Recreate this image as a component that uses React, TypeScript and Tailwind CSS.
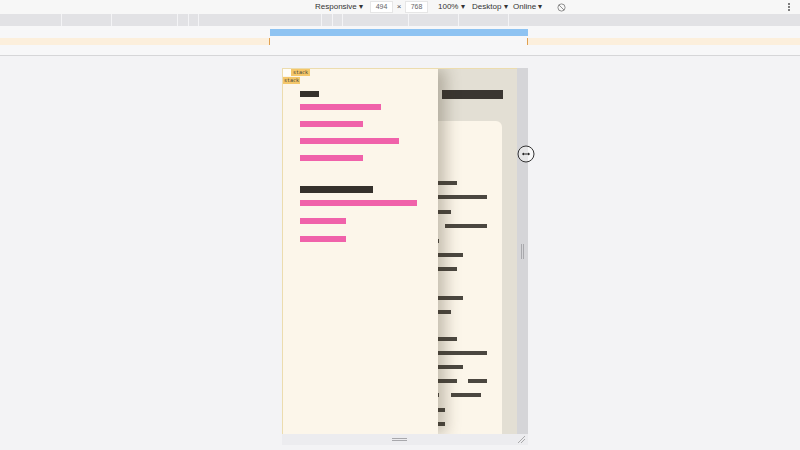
import React from 'react';

const pink = [
  { w: 81 },
  { w: 63 },
  { w: 99 },
  { w: 63 },
];
const pink2 = [{ w: 117 }, { w: 46 }, { w: 46 }];

// card lines: [top offset, end x of first bar, optional second bar [x1, x2]]
const cardLines: [number, number, [number, number]?][] = [
  [181, 457],
  [195, 487],
  [210, 451],
  [224, 0, [445, 487]],
  [239, 439],
  [253, 463],
  [267, 457],
  [296, 463],
  [310, 451],
  [337, 457],
  [351, 487],
  [365, 463],
  [379, 457, [468, 487]],
  [393, 439, [451, 481]],
  [408, 445],
  [422, 445],
];

const CARD_LEFT = 410;

function Toolbar() {
  return (
    <div className="h-[14px] bg-[#f7f7f7] flex items-center text-[8px] text-[#333] relative" style={{ fontFamily: 'Liberation Sans, Arial, sans-serif' }}>
      <div className="flex items-center pl-[315px]">
        <span className="w-[50px]">Responsive ▾</span>
        <span className="ml-[5px] w-[23px] h-[12px] bg-white border border-[#e6e6e6] flex items-center justify-center text-[7px] text-[#666]">494</span>
        <span className="w-[12px] text-center text-[#555]">×</span>
        <span className="w-[23px] h-[12px] bg-white border border-[#e6e6e6] flex items-center justify-center text-[7px] text-[#666]">768</span>
        <span className="ml-[10px] w-[34px]">100% ▾</span>
        <span className="w-[41px]">Desktop ▾</span>
        <span className="w-[44px]">Online ▾</span>
        <svg width="9" height="9" viewBox="0 0 10 10" fill="none" stroke="#777" strokeWidth="0.9">
          <circle cx="5" cy="5" r="4" />
          <path d="M2.2 2.2 L7.8 7.8" />
        </svg>
      </div>
      <div className="absolute right-[10px] top-[3px] flex flex-col gap-[1px]">
        <span className="w-[2px] h-[2px] bg-[#555] rounded-full" />
        <span className="w-[2px] h-[2px] bg-[#555] rounded-full" />
        <span className="w-[2px] h-[2px] bg-[#555] rounded-full" />
      </div>
    </div>
  );
}

function Rulers() {
  const seps = [62, 50, 66, 11, 10, 123, 11, 10, 66, 50, 50];
  return (
    <div>
      <div className="h-[12px] bg-[#e2e2e5] flex">
        {seps.map((w, i) => (
          <div key={i} className="h-full border-r border-[#f4f4f6]" style={{ width: w }} />
        ))}
      </div>
      <div className="h-[12px] bg-[#f7f7f8] flex items-center pl-[270px]">
        <div className="w-[258px] h-[7px] bg-[#8ec3f2]" />
      </div>
      <div className="h-[7px] flex">
        <div className="w-[270px] bg-[#fcefdc] border-r border-[#e0a050]" />
        <div className="w-[257px] bg-[#f7f7f8]" />
        <div className="flex-1 bg-[#fcefdc] border-l border-[#e0a050]" />
      </div>
      <div className="h-[11px] bg-[#f7f7f8] border-b border-[#d6d6d8]" />
    </div>
  );
}

function Device() {
  return (
    <div className="relative w-[235px] h-[366px] bg-[#e3dfd4] border-t border-[#ecdcae] overflow-hidden">
      {/* page behind the drawer */}
      <div className="absolute left-[160px] top-[21px] w-[61px] h-[9px] bg-[#3a3631]" />
      <div className="absolute top-[52px] bottom-0 bg-[#fcf6ea] rounded-tr-[6px]" style={{ left: CARD_LEFT - 282, width: 502 - CARD_LEFT }}>
        {cardLines.map(([y, end, second], i) => (
          <React.Fragment key={i}>
            {end > 0 && (
              <div className="absolute h-[4px] bg-[#4b4740]" style={{ top: y - 121, left: 10, width: end - CARD_LEFT - 10 }} />
            )}
            {second && (
              <div className="absolute h-[4px] bg-[#4b4740]" style={{ top: y - 121, left: second[0] - CARD_LEFT, width: second[1] - second[0] }} />
            )}
          </React.Fragment>
        ))}
      </div>

      {/* drawer */}
      <div className="absolute left-0 top-0 bottom-0 w-[156px] bg-[#fcf6ea] border-l border-[#ecdcae] shadow-[8px_0_14px_rgba(60,50,30,0.28)] flex flex-col pl-[17px]">
        <div className="flex flex-col" style={{ fontFamily: 'DejaVu Sans Mono, monospace' }}>
          <div className="-ml-[17px] flex items-center">
            <span className="w-[8px] h-[7px] bg-[#fffdf8]" />
            <span className="w-fit px-[2px] bg-[#f4c76a] text-[5px] leading-[7px] text-[#333]">stack</span>
          </div>
          <span className="-ml-[17px] mt-[1px] w-fit px-[1px] bg-[#f4c76a] text-[5px] leading-[7px] text-[#333]">stack</span>
        </div>
        <div className="mt-[7px] w-[19px] h-[6px] bg-[#35312c]" />
        <div className="flex flex-col gap-[11px] mt-[7px]">
          {pink.map((p, i) => (
            <div key={i} className="h-[6px] bg-[#f062aa]" style={{ width: p.w }} />
          ))}
        </div>
        <div className="mt-[25px] w-[73px] h-[7px] bg-[#35312c]" />
        <div className="flex flex-col gap-[12px] mt-[7px]">
          {pink2.map((p, i) => (
            <div key={i} className="h-[6px] bg-[#f062aa]" style={{ width: p.w }} />
          ))}
        </div>
      </div>
    </div>
  );
}

export default function App() {
  return (
    <div className="w-[800px] h-[450px] bg-[#f3f3f5] overflow-hidden relative">
      <Toolbar />
      <Rulers />
      <div className="pl-[282px] pt-[12px]">
        <div className="flex">
          <Device />
          <div className="w-[11px] h-[366px] bg-[#d5d5d8] flex items-center justify-center">
            <div className="flex gap-[1px]">
              <span className="w-[1px] h-[15px] bg-[#a8a8ac]" />
              <span className="w-[1px] h-[15px] bg-[#a8a8ac]" />
            </div>
          </div>
        </div>
        <div className="w-[246px] h-[11px] bg-[#ececef] relative flex items-center justify-center">
          <div className="flex flex-col gap-[1px] -ml-[12px]">
            <span className="w-[15px] h-[1px] bg-[#a8a8ac]" />
            <span className="w-[15px] h-[1px] bg-[#a8a8ac]" />
          </div>
          <svg className="absolute right-[2px] bottom-[1px]" width="9" height="9" viewBox="0 0 9 9" stroke="#999" strokeWidth="0.8">
            <path d="M1 8 L8 1 M4 8 L8 4" />
          </svg>
        </div>
      </div>
      {/* resize cursor */}
      <svg className="absolute left-[517px] top-[145px]" width="18" height="18" viewBox="0 0 18 18">
        <circle cx="9" cy="9" r="8" fill="rgba(255,255,255,0.4)" stroke="#333" strokeWidth="1" />
        <path d="M5.5 9 H12.5" stroke="#222" strokeWidth="1" />
        <path d="M5 9 L7 7.5 V10.5 Z M13 9 L11 7.5 V10.5 Z" fill="#222" />
      </svg>
    </div>
  );
}
